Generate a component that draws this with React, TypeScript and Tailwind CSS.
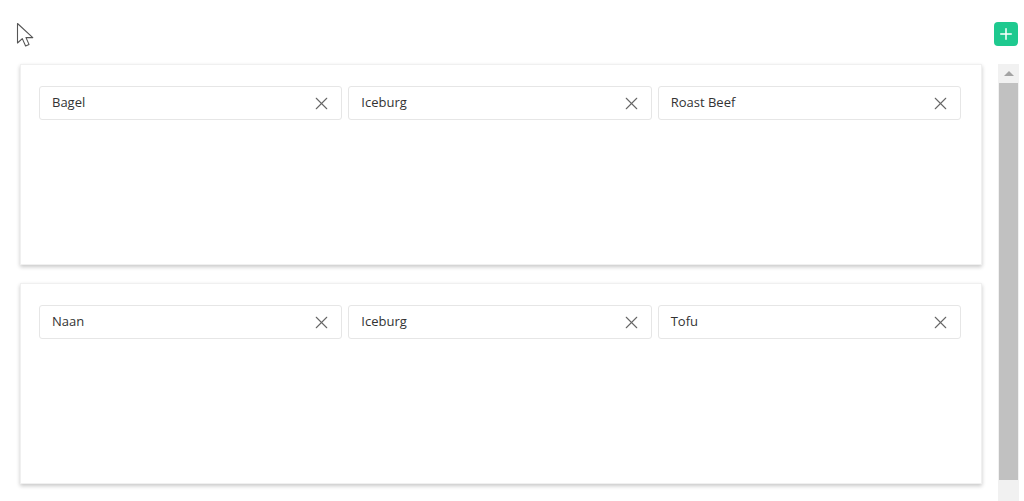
import { X, Plus } from "lucide-react";

type Sandwich = { id: number; items: string[] };

const sandwiches: Sandwich[] = [
  { id: 1, items: ["Bagel", "Iceburg", "Roast Beef"] },
  { id: 2, items: ["Naan", "Iceburg", "Tofu"] },
];

function Cursor() {
  return (
    <svg
      className="absolute left-[16px] top-[22px]"
      width="20"
      height="26"
      viewBox="0 0 20 26"
      fill="none"
    >
      <path
        d="M1.5 1.5 L1.5 21 L6.3 16.6 L9.6 24 L13 22.4 L10 15.6 L16.8 15.6 Z"
        fill="#fff"
        stroke="#555"
        strokeWidth="1.1"
        strokeLinejoin="round"
      />
    </svg>
  );
}

export default function App() {
  return (
    <div className="relative h-[501px] w-[1024px] overflow-hidden bg-white font-['Open_Sans',sans-serif] text-[13px] text-[#333]">
      <Cursor />

      {/* barra in alto con il pulsante aggiungi */}
      <div className="flex justify-end pr-[6px] pt-[22px]">
        <button className="flex h-[24px] w-[24px] items-center justify-center rounded-[4px] bg-[#1ec98f] text-white">
          <Plus size={18} strokeWidth={2} />
        </button>
      </div>

      <div className="mt-[18px] flex gap-[16px] pl-[20px]">
        <div className="flex w-[962px] flex-col gap-[18px]">
          {sandwiches.map((s) => (
            <div
              key={s.id}
              className="h-[201px] border border-[#f0f0f0] bg-white pl-[18px] pr-[20px] pt-[21px] shadow-[0_2px_4px_rgba(0,0,0,0.22)]"
            >
              <div className="grid grid-cols-3 gap-[6px]">
                {s.items.map((item, i) => (
                  <div
                    key={i}
                    className="flex h-[34px] items-center justify-between rounded-[3px] border border-[#e6e6e6] pl-[12px] pr-[9px]"
                  >
                    <span>{item}</span>
                    <X size={21} strokeWidth={1.25} className="text-[#666]" />
                  </div>
                ))}
              </div>
            </div>
          ))}
        </div>

        {/* scrollbar finta */}
        <div className="flex h-[440px] w-[21px] flex-col bg-[#f1f1f1]">
          <div className="flex h-[19px] items-center justify-center">
            <div className="h-0 w-0 border-x-[5px] border-b-[5px] border-x-transparent border-b-[#a3a3a3]" />
          </div>
          <div className="mx-[1px] h-[397px] bg-[#c1c1c1]" />
        </div>
      </div>
    </div>
  );
}
